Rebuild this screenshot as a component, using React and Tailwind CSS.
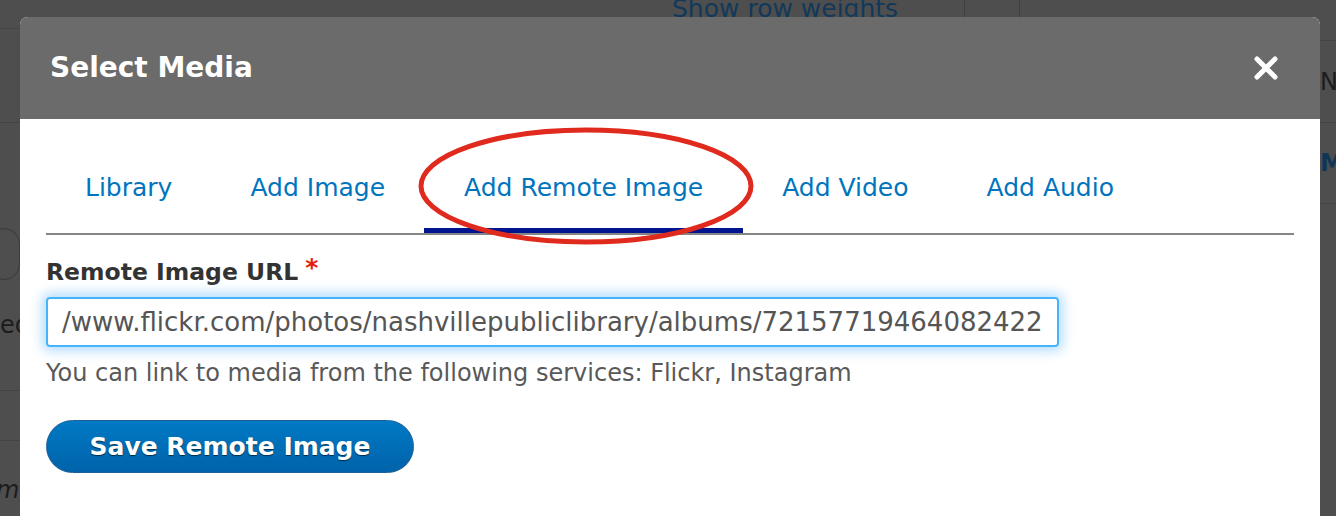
import React from "react";

const FONT = { fontFamily: '"DejaVu Sans", "Liberation Sans", sans-serif' };

const TABS = ["Library", "Add Image", "Add Remote Image", "Add Video", "Add Audio"];
const ACTIVE = "Add Remote Image";

// ---- Close icon (thick rounded X) ----
const CloseIcon = () => (
  <svg width="26" height="26" viewBox="0 0 26 26" aria-hidden="true">
    <path d="M4 4 L22 22 M22 4 L4 22" stroke="#fff" strokeWidth="5" strokeLinecap="round" />
  </svg>
);

// ---- Red annotation ring drawn over the active tab ----
const AnnotationRing = () => (
  <svg
    className="pointer-events-none absolute left-[-8px] top-[-48px]"
    width="340"
    height="122"
    viewBox="0 0 340 122"
    aria-hidden="true"
  >
    <ellipse cx="170" cy="61" rx="165" ry="56" fill="none" stroke="#e02a1d" strokeWidth="5" />
  </svg>
);

/**
 * Dimmed page that sits behind the dialog
 */
const BackgroundPage = () => (
  <div className="h-[516px] w-full overflow-hidden bg-[#4e4e4e]">
    <div className="flex h-[17px] items-start">
      <div className="w-[672px]" />
      <div className="-mt-[10px] w-[292px] text-[25px] text-[#12395a]" style={FONT}>Show row weights</div>
      <div className="h-[17px] w-[55px] border-l border-[#3f3f3f]" />
      <div className="h-[17px] border-l border-[#3f3f3f]" />
    </div>
    <div className="flex justify-between">
      {/* left strip */}
      <div className="flex w-[20px] flex-col">
        <div className="mt-[11px] h-[94px] border-t border-[#444]" />
        <div className="h-[106px] border-t border-[#444]" />
        <div className="-ml-[12px] h-[52px] w-[32px] rounded-full border border-[#3a3a3a]" />
        <div className="h-[110px] pt-[32px] text-[24px] leading-[26px] text-[#1c1c1c]" style={FONT}>ed</div>
        <div className="h-[50px] border-t border-[#444]" />
        <div className="h-[80px] border-t border-[#444] pt-[36px]">
          <div className="-ml-[4px] text-[24px] italic leading-[26px] text-[#1c1c1c]" style={FONT}>m,</div>
        </div>
      </div>
      {/* right strip */}
      <div className="flex w-[16px] flex-col">
        <div className="mt-[23px] flex h-[82px] items-center border-t border-[#444]">
          <span className="text-[24px] leading-none text-[#1c1c1c]" style={FONT}>No</span>
        </div>
        <div className="flex h-[81px] items-center border-t border-[#444]">
          <span className="text-[24px] font-bold leading-none text-[#0f3658]" style={FONT}>MA</span>
        </div>
        <div className="border-t border-[#444]" />
      </div>
    </div>
  </div>
);

const App = () => {
  return (
    <div className="relative h-[516px] w-[1336px] overflow-hidden" style={FONT}>
      <BackgroundPage />

      {/* Dialog */}
      <div className="absolute left-[20px] top-[17px] w-[1300px] overflow-hidden rounded-t-[8px] bg-white">
        <div className="flex h-[102px] items-center justify-between bg-[#6b6b6b] pl-[30px] pr-[41px]">
          <h1 className="text-[28px] font-bold text-white">Select Media</h1>
          <button type="button">
            <CloseIcon />
          </button>
        </div>

        <div className="px-[26px]">
          {/* Tabs */}
          <div className="flex border-b-2 border-[#858585] pt-[54px]">
            {TABS.map((tab) => {
              const active = tab === ACTIVE;
              return (
                <div key={tab} className="relative">
                  <div
                    className={
                      active
                        ? "border-b-[5px] border-[#00158f] px-[40px] pb-[25px] text-[25px] leading-[30px] text-[#0074bd]"
                        : "px-[39px] pb-[30px] text-[25px] leading-[30px] text-[#0074bd]"
                    }
                  >
                    {tab}
                  </div>
                  {active && <AnnotationRing />}
                </div>
              );
            })}
          </div>

          {/* Remote URL form */}
          <div className="pt-[22px]">
            <label className="flex items-start text-[23.5px] font-bold leading-[30px] text-[#333]">
              Remote Image URL
              <span className="ml-[7px] -mt-[4px] text-[25px] text-[#e3200f]">*</span>
            </label>
            <input
              type="text"
              readOnly
              value="/www.flickr.com/photos/nashvillepubliclibrary/albums/72157719464082422"
              className="mt-[10px] h-[50px] w-[1013px] rounded-[4px] border-2 border-[#46b4fa] px-[14px] text-[26px] text-[#555] shadow-[0_0_12px_4px_rgba(90,180,250,0.45)] outline-none"
              style={FONT}
            />
            <p className="mt-[11px] text-[24px] leading-[30px] text-[#595959]">
              You can link to media from the following services: Flickr, Instagram
            </p>
            <button
              type="button"
              className="mt-[32px] h-[53px] w-[368px] rounded-full border border-[#1d5f99] bg-gradient-to-b from-[#0079c4] to-[#0063aa] text-[25px] font-bold text-white [text-shadow:0_1px_1px_rgba(0,0,0,0.6)]"
              style={FONT}
            >
              Save Remote Image
            </button>
          </div>
          <div className="h-[60px]" />
        </div>
      </div>
    </div>
  );
};

export default App;
